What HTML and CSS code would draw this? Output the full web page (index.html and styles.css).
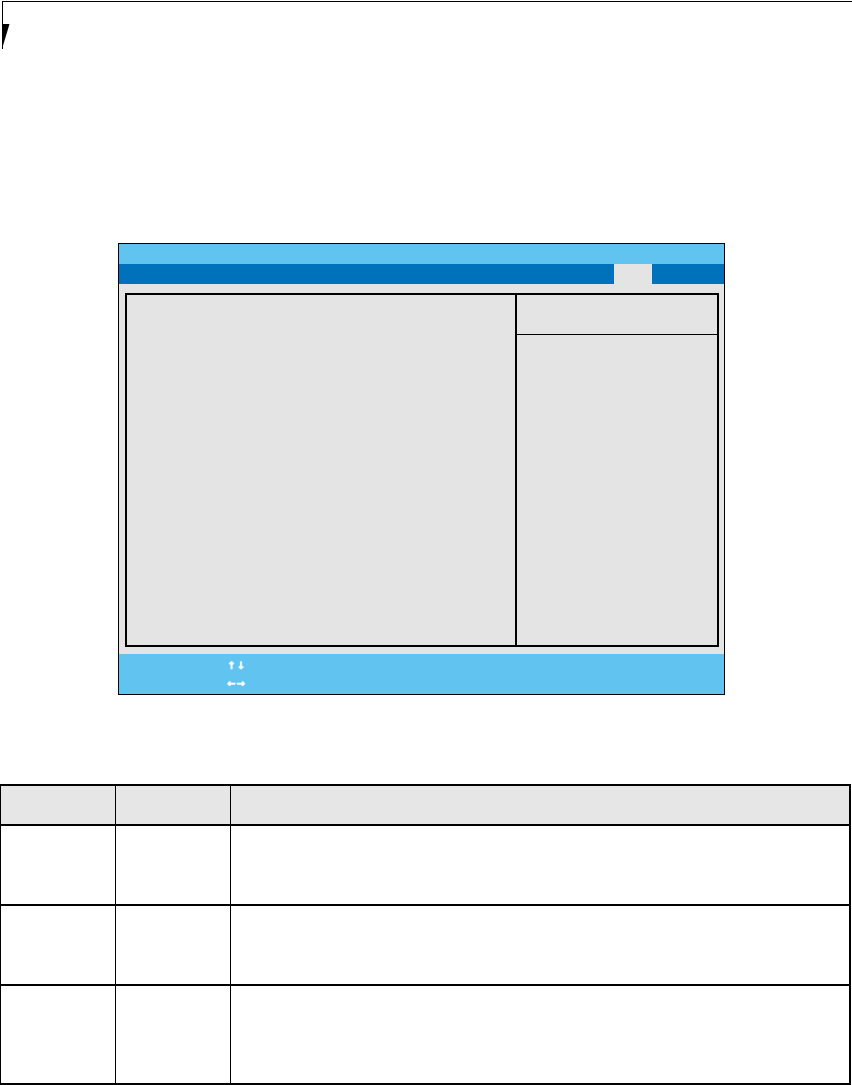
FILE: index.html
```html
<!DOCTYPE html>
<html>
    <head>
        <title>BIOS Setup</title>
        <link rel="stylesheet" href="styles.css">
    </head>
    <body>
        <div class="page-head">
            <svg class="tab-mark" width="8" height="25" viewBox="0 0 8 25">
                <polygon points="0,0 7.5,0 0,25" fill="#000" />
            </svg>
        </div>
        <div class="bios">
            <div class="title-bar"></div>
            <div class="menu-bar">
                <div class="menu-fill"></div>
                <div class="menu-tab"></div>
                <div class="menu-end"></div>
            </div>
            <div class="bios-body">
                <div class="panels">
                    <div class="panel-main"></div>
                    <div class="panel-help">
                        <div class="help-top"></div>
                    </div>
                </div>
            </div>
            <div class="bios-foot">
                <div class="keys">↑↓</div>
                <div class="keys">←→</div>
            </div>
        </div>
        <table class="opts">
            <colgroup>
                <col class="c1">
                <col class="c2">
                <col>
            </colgroup>
            <thead>
                <tr><th></th><th></th><th></th></tr>
            </thead>
            <tbody>
                <tr class="r1"><td></td><td></td><td></td></tr>
                <tr class="r2"><td></td><td></td><td></td></tr>
                <tr class="r3"><td></td><td></td><td></td></tr>
            </tbody>
        </table>
    </body>
</html>
```
FILE: styles.css
```css
* {
    margin: 0;
    padding: 0;
    box-sizing: border-box;
}
body {
    font-family: "DejaVu Sans", sans-serif;
    background-color: #fff;
    color: #000;
}
.page-head {
    margin: 1px 0 0 2px;
    height: 48px;
    border-top: 1px solid #000;
    border-left: 1px solid #000;
}
.tab-mark {
    display: block;
    margin: 22px 0 0 -1px;
}
.bios {
    width: 607px;
    margin: 194px 0 0 118px;
    border: 1px solid #000;
}
.title-bar {
    height: 20px;
    background-color: #61c3f0;
}
.menu-bar {
    display: flex;
    height: 20px;
    background-color: #0072bc;
}
.menu-fill {
    flex: 1;
}
.menu-tab {
    width: 38px;
    background-color: #e4e4e4;
}
.menu-end {
    width: 72px;
}
.bios-body {
    height: 370px;
    padding: 9px 5px 0 6px;
    background-color: #e4e4e4;
}
.panels {
    display: flex;
    height: 354px;
    border: 2px solid #000;
}
.panel-main {
    width: 390px;
    border-right: 2px solid #000;
}
.panel-help {
    flex: 1;
}
.help-top {
    height: 40px;
    border-bottom: 1px solid #000;
}
.bios-foot {
    height: 40px;
    padding: 3px 0 0 108px;
    background-color: #61c3f0;
}
.keys {
    height: 18px;
    color: #fff;
    font-family: "DejaVu Sans", sans-serif;
    font-size: 10px;
    font-weight: bold;
    line-height: 18px;
    letter-spacing: 1px;
    -webkit-text-stroke: 0.6px #fff;
}
.opts {
    width: 851px;
    margin-top: 89px;
    border-collapse: collapse;
    table-layout: fixed;
}
.c1,
.c2 {
    width: 115px;
}
.opts th,
.opts td {
    border-left: 1px solid #000;
    border-right: 1px solid #000;
    border-bottom: 2px solid #000;
}
.opts th {
    height: 40px;
    background-color: #e6e6e6;
    border-top: 2px solid #000;
}
.opts th:last-child,
.opts td:last-child {
    border-right: 2px solid #000;
}
.r1 td,
.r2 td {
    height: 80px;
}
.r3 td {
    height: 99px;
}
```
